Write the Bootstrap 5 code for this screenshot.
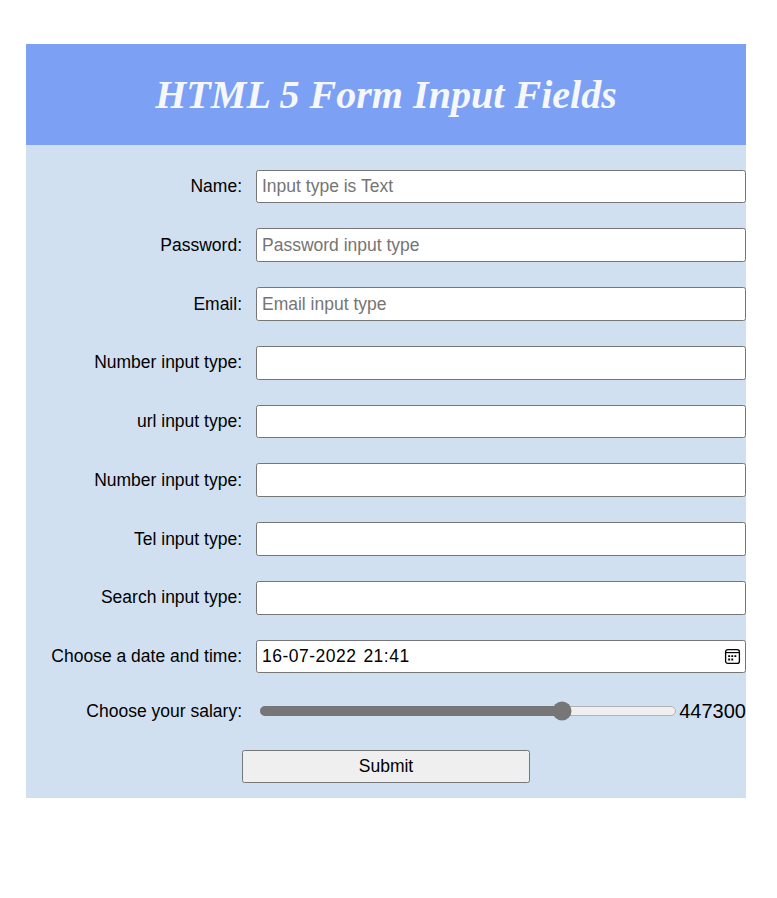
<!DOCTYPE html>
<html lang="en">
<head>
<meta charset="utf-8">
<meta name="viewport" content="width=device-width, initial-scale=1">
<title>HTML 5 Form Input Fields</title>
<link href="https://cdn.jsdelivr.net/npm/bootstrap@5.3.0/dist/css/bootstrap.min.css" rel="stylesheet">
<style>
body{font-family:"Liberation Sans",Arial,sans-serif;font-size:17.5px;line-height:21px;color:#000;background:#fff}
.sheet{width:720px;margin:44px 0 0 26px;background:#d1e0f1}
.banner{height:101px;background:#7ba0f4;color:#f5f7fb}
.banner h1{font:italic 700 40.1px/46px "Liberation Serif","Times New Roman",serif}
.fields{padding-top:24.7px;gap:25.05px}
.line{height:33.7px}
.caption{width:216px;margin-right:14px}
.line .caption{padding-top:.5px}
.line .form-control{height:33.7px;padding:0 5px;border:1px solid #767676;border-radius:2.5px;font-size:17.5px;line-height:21px;color:#000;background:#fff}
.line .form-control::placeholder{color:#757575;opacity:1}
.line .when{letter-spacing:.5px;word-spacing:1.5px}
.picker{right:5px;top:8px}
.salary{height:24px;margin-top:1px}
.salary input{zoom:1.25;accent-color:#767676;margin:0;width:334px;height:16px}
.knob{padding-left:3px}
.salary output{font-size:20px;line-height:24px;padding:0}
.send{width:288px;height:33px;border:1px solid #767676;border-radius:2.5px;background:#efefef;color:#000;font-size:17.5px;line-height:21px;padding:0 0 1px}
.foot{padding:26.9px 0 15px}
</style>
<script src="https://cdn.jsdelivr.net/npm/bootstrap@5.3.0/dist/js/bootstrap.bundle.min.js"></script>
</head>
<body>
<main class="sheet">
  <header class="banner d-flex align-items-center justify-content-center">
    <h1 class="m-0 text-nowrap">HTML 5 Form Input Fields</h1>
  </header>
  <form onsubmit="return false">
    <div class="fields d-flex flex-column">
      <div class="line d-flex align-items-center"><label class="caption flex-shrink-0 text-end" for="name">Name:</label><input id="name" class="form-control" type="text" placeholder="Input type is Text"></div>
      <div class="line d-flex align-items-center"><label class="caption flex-shrink-0 text-end" for="pw">Password:</label><input id="pw" class="form-control" type="password" placeholder="Password input type"></div>
      <div class="line d-flex align-items-center"><label class="caption flex-shrink-0 text-end" for="email">Email:</label><input id="email" class="form-control" type="email" placeholder="Email input type"></div>
      <div class="line d-flex align-items-center"><label class="caption flex-shrink-0 text-end" for="num1">Number input type:</label><input id="num1" class="form-control" type="number"></div>
      <div class="line d-flex align-items-center"><label class="caption flex-shrink-0 text-end" for="url">url input type:</label><input id="url" class="form-control" type="url"></div>
      <div class="line d-flex align-items-center"><label class="caption flex-shrink-0 text-end" for="num2">Number input type:</label><input id="num2" class="form-control" type="number"></div>
      <div class="line d-flex align-items-center"><label class="caption flex-shrink-0 text-end" for="tel">Tel input type:</label><input id="tel" class="form-control" type="tel"></div>
      <div class="line d-flex align-items-center"><label class="caption flex-shrink-0 text-end" for="search">Search input type:</label><input id="search" class="form-control" type="search"></div>
      <div class="line d-flex align-items-center"><label class="caption flex-shrink-0 text-end" for="when">Choose a date and time:</label>
        <div class="position-relative flex-grow-1">
          <input id="when" class="form-control when" type="text" value="16-07-2022 21:41">
          <svg class="picker position-absolute" width="17" height="17" viewBox="0 0 17 17" aria-hidden="true">
            <rect x="1.6" y="1.6" width="13.8" height="13.8" rx="2.2" fill="none" stroke="#000" stroke-width="1.3"/>
            <path d="M2 4.6H15" stroke="#000" stroke-width="1.2"/>
            <path d="M4.2 8.2h1.9M7.3 8.2h1.9M10.4 8.2h1.9M4.2 11.5h1.9M7.3 11.5h1.9" stroke="#000" stroke-width="1.8"/>
          </svg>
        </div>
      </div>
      <div class="salary d-flex align-items-center"><label class="caption flex-shrink-0 text-end" for="pay">Choose your salary:</label><span class="knob d-flex flex-grow-1"><input id="pay" type="range" min="0" max="1000" value="738"></span><output for="pay">447300</output></div>
    </div>
    <div class="foot d-flex justify-content-center"><button class="send btn" type="submit">Submit</button></div>
  </form>
</main>
</body>
</html>
